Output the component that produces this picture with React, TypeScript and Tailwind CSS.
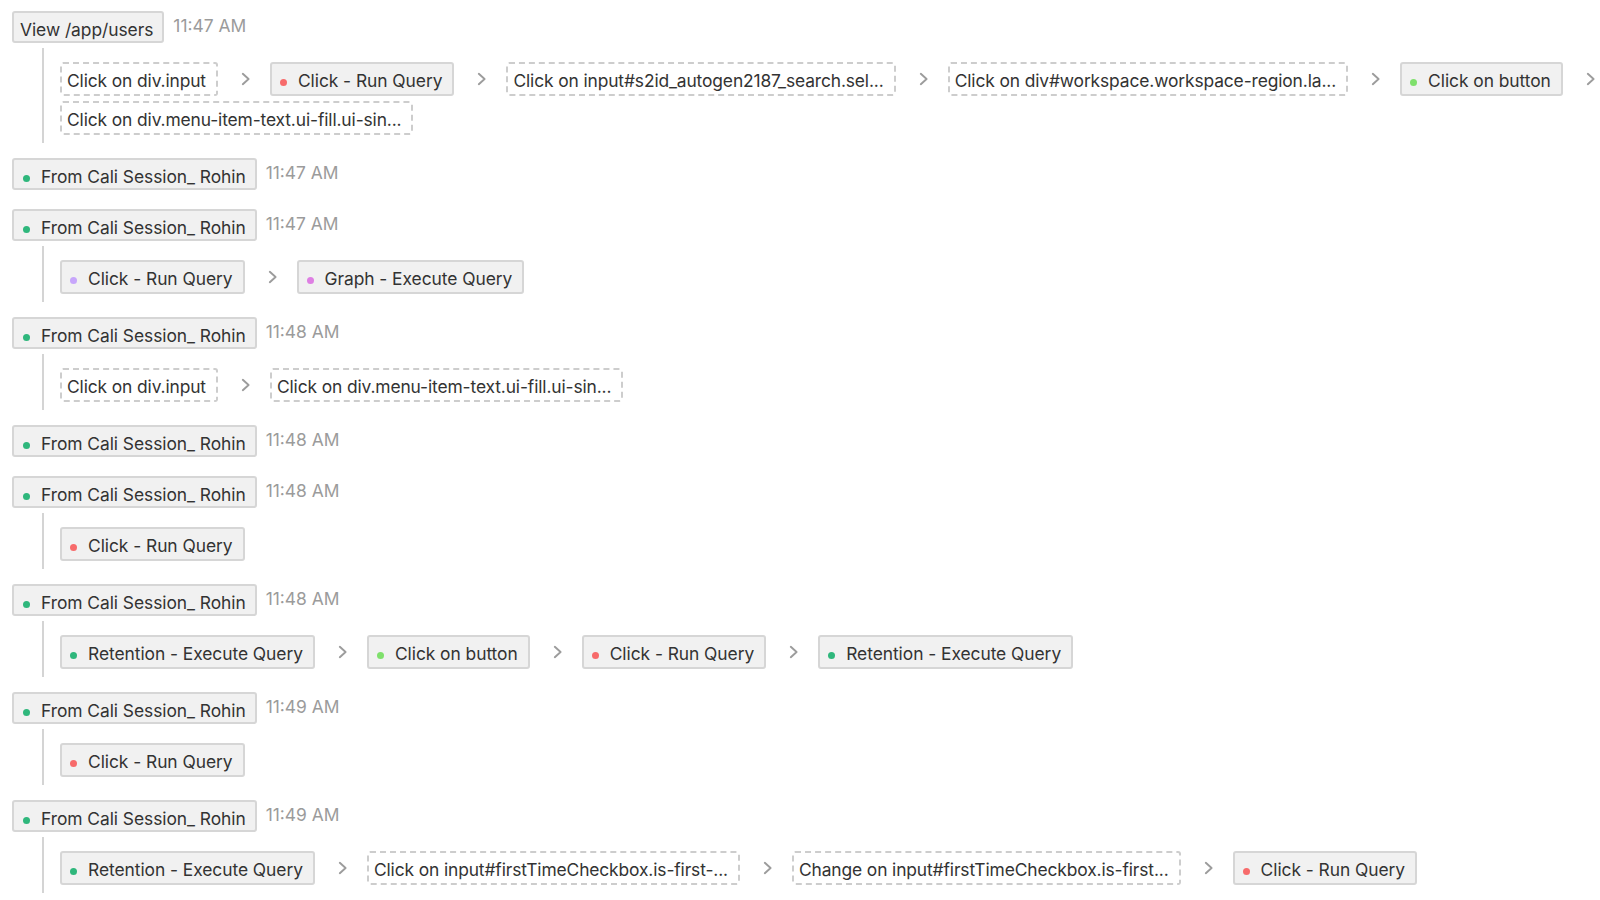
import React from "react";

type Child = { t: string; dot?: string; dashed?: boolean };
type Item = { label: string; time: string; dot?: string; children: Child[] };

const RED = "#f76b6b";
const LGREEN = "#7fe06c";
const GREEN = "#2fb77c";
const LAV = "#c7a6fb";
const PINK = "#de7fe3";

const items: Item[] = [
  {
    label: "View /app/users",
    time: "11:47 AM",
    children: [
      { t: "Click on div.input", dashed: true },
      { t: "Click - Run Query", dot: RED },
      { t: "Click on input#s2id_autogen2187_search.sel...", dashed: true },
      { t: "Click on div#workspace.workspace-region.la...", dashed: true },
      { t: "Click on button", dot: LGREEN },
      { t: "Click on div.menu-item-text.ui-fill.ui-sin...", dashed: true },
    ],
  },
  { label: "From Cali Session_ Rohin", time: "11:47 AM", dot: GREEN, children: [] },
  {
    label: "From Cali Session_ Rohin",
    time: "11:47 AM",
    dot: GREEN,
    children: [
      { t: "Click - Run Query", dot: LAV },
      { t: "Graph - Execute Query", dot: PINK },
    ],
  },
  {
    label: "From Cali Session_ Rohin",
    time: "11:48 AM",
    dot: GREEN,
    children: [
      { t: "Click on div.input", dashed: true },
      { t: "Click on div.menu-item-text.ui-fill.ui-sin...", dashed: true },
    ],
  },
  { label: "From Cali Session_ Rohin", time: "11:48 AM", dot: GREEN, children: [] },
  {
    label: "From Cali Session_ Rohin",
    time: "11:48 AM",
    dot: GREEN,
    children: [{ t: "Click - Run Query", dot: RED }],
  },
  {
    label: "From Cali Session_ Rohin",
    time: "11:48 AM",
    dot: GREEN,
    children: [
      { t: "Retention - Execute Query", dot: GREEN },
      { t: "Click on button", dot: LGREEN },
      { t: "Click - Run Query", dot: RED },
      { t: "Retention - Execute Query", dot: GREEN },
    ],
  },
  {
    label: "From Cali Session_ Rohin",
    time: "11:49 AM",
    dot: GREEN,
    children: [{ t: "Click - Run Query", dot: RED }],
  },
  {
    label: "From Cali Session_ Rohin",
    time: "11:49 AM",
    dot: GREEN,
    children: [
      { t: "Retention - Execute Query", dot: GREEN },
      { t: "Click on input#firstTimeCheckbox.is-first-...", dashed: true },
      { t: "Change on input#firstTimeCheckbox.is-first...", dashed: true },
      { t: "Click - Run Query", dot: RED },
    ],
  },
];

function Dot({ color, gap }: { color: string; gap: string }) {
  return (
    <span
      className={"inline-block w-[7px] h-[7px] rounded-full align-middle " + gap}
      style={{ backgroundColor: color }}
    />
  );
}

function Chevron() {
  return (
    <span className="w-[52px] pl-[23px] flex items-center">
      <svg width="10" height="14" viewBox="0 0 10 14" fill="none">
        <path
          d="M1.8 1.8 L7.6 7 L1.8 12.2"
          stroke="#9c9c9c"
          strokeWidth="1.9"
          strokeLinecap="round"
          strokeLinejoin="round"
        />
      </svg>
    </span>
  );
}

export default function App() {
  return (
    <div
      className="w-[1600px] h-[900px] bg-white overflow-hidden pt-[11px] pl-[12px] text-[#333333]"
      style={{ fontFamily: "Inter, 'Liberation Sans', sans-serif" }}
    >
      {items.map((it, i) => (
        <div key={i} className={it.children.length ? "pb-[15px]" : "pb-[19px]"}>
          <div className="flex items-start gap-[9px]">
            <div
              className={
                "h-[32px] border-2 border-[#d6d6d6] bg-[#f1f1f1] rounded-[3px] pr-[9px] pt-[5px] text-[17.4px] leading-[23px] tracking-[-0.05px] whitespace-nowrap " +
                (it.dot ? "pl-[9px]" : "pl-[6px]")
              }
            >
              {it.dot && <Dot color={it.dot} gap="mr-[11px]" />}
              {it.label}
            </div>
            <div className="text-[17.4px] leading-[28px] mt-[1px] text-[#9b9b9b] whitespace-nowrap">
              {it.time}
            </div>
          </div>
          {it.children.length > 0 && (
            <div className="ml-[30px] mt-[5px] border-l-2 border-[#d4d4d4] pl-[16px] pt-[14px] pb-[8px]">
              <div className="flex flex-wrap gap-y-[5px] w-[1620px]">
                {it.children.map((c, j) => (
                  <div key={j} className="flex items-stretch">
                    <div
                      className={
                        c.dashed
                          ? "h-[34px] border-2 border-dashed border-[#cdcdcd] bg-white rounded-[3px] pl-[5px] pr-[10px] pt-[4px] text-[17.4px] leading-[26px] tracking-[-0.12px] whitespace-nowrap"
                          : "h-[34px] border-2 border-[#d6d6d6] bg-[#f1f1f1] rounded-[3px] pl-[8px] pr-[10px] pt-[4px] text-[17.4px] leading-[26px] tracking-[-0.05px] whitespace-nowrap"
                      }
                    >
                      {c.dot && <Dot color={c.dot} gap="mr-[11px]" />}
                      {c.t}
                    </div>
                    {j < it.children.length - 1 && <Chevron />}
                  </div>
                ))}
              </div>
            </div>
          )}
        </div>
      ))}
    </div>
  );
}
